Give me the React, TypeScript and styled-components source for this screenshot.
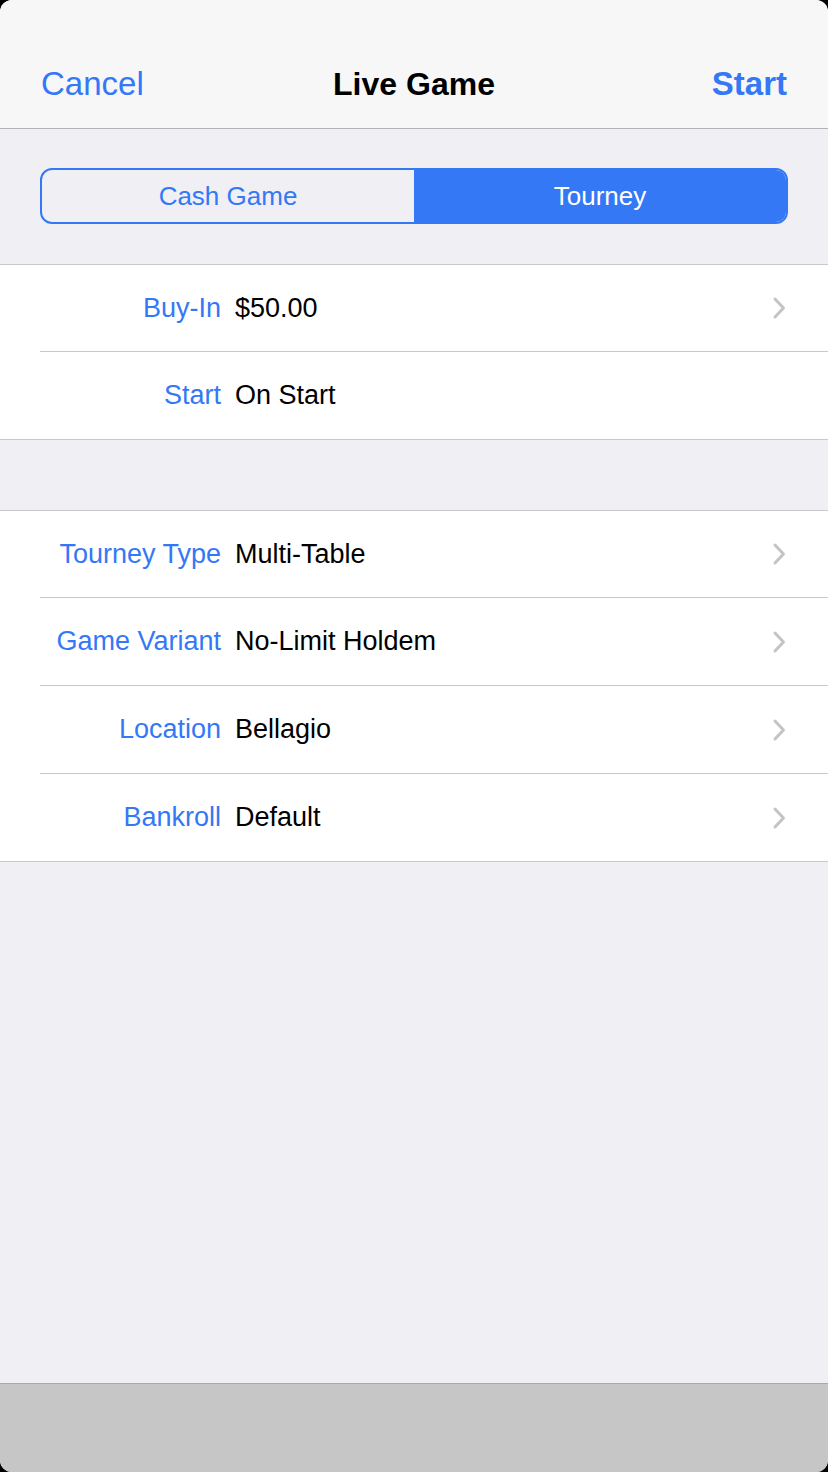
import React, { useState } from 'react'
import styled, { createGlobalStyle } from 'styled-components'

const GlobalStyle = createGlobalStyle`
  html, body {
    margin: 0;
    padding: 0;
    background: #000;
  }
  body {
    font-family: "Liberation Sans", Arial, sans-serif;
    -webkit-font-smoothing: antialiased;
  }
`

const BLUE = '#3478f6'

const Screen = styled.div`
  display: flex;
  flex-direction: column;
  height: 1472px;
  background: #efeff4;
  border-radius: 12px;
  overflow: hidden;
`

const NavBar = styled.header`
  display: grid;
  grid-template-columns: 1fr auto 1fr;
  align-items: center;
  height: 88px;
  padding: 40px 41px 0 41px;
  background: #f7f7f8;
  border-bottom: 1px solid #b3b3b6;
`

const NavButton = styled.button<{ $bold?: boolean; $align: 'left' | 'right' }>`
  justify-self: ${p => (p.$align === 'left' ? 'start' : 'end')};
  background: none;
  border: none;
  padding: 0;
  font-family: inherit;
  font-size: 33px;
  font-weight: ${p => (p.$bold ? 700 : 400)};
  color: ${BLUE};
  cursor: pointer;
`

const Title = styled.h1`
  margin: 0;
  font-size: 32px;
  font-weight: 700;
  color: #000;
`

const SegmentArea = styled.div`
  padding: 39px 40px 40px;
  border-bottom: 1px solid #c8c7cc;
`

const Segmented = styled.div`
  display: grid;
  grid-template-columns: 1fr 1fr;
  height: 56px;
  border: 2px solid ${BLUE};
  border-radius: 12px;
  overflow: hidden;
  box-sizing: border-box;
`

const Segment = styled.button<{ $active: boolean }>`
  border: none;
  padding: 0;
  font-family: inherit;
  font-size: 26px;
  background: ${p => (p.$active ? BLUE : 'transparent')};
  color: ${p => (p.$active ? '#fff' : BLUE)};
  cursor: pointer;
`

const Section = styled.section<{ $gap?: boolean }>`
  background: #fff;
  border-bottom: 1px solid #c8c7cc;
  ${p => (p.$gap ? 'margin-top: 70px; border-top: 1px solid #c8c7cc;' : '')}
`

const Row = styled.div<{ $last?: boolean }>`
  display: flex;
  align-items: center;
  height: 87px;
  margin-left: 40px;
  padding-right: 42px;
  border-bottom: ${p => (p.$last ? 'none' : '1px solid #c8c7cc')};

  &:first-child {
    height: 86px;
  }
`

const Label = styled.span`
  width: 181px;
  flex-shrink: 0;
  text-align: right;
  font-size: 27px;
  color: ${BLUE};
`

const Value = styled.span`
  flex: 1;
  margin-left: 14px;
  font-size: 27px;
  color: #000;
`

const Spacer = styled.div`
  flex: 1;
`

const Toolbar = styled.footer`
  height: 88px;
  background: #c6c6c6;
  border-top: 1px solid #a9a9ad;
`

const Chevron = () => (
  <svg width="14" height="24" viewBox="0 0 14 24" fill="none">
    <path d="M3 3l8.5 9L3 21" stroke="#c4c4c7" strokeWidth="3" strokeLinecap="round" strokeLinejoin="round" />
  </svg>
)

type Item = { label: string; value: string; chevron: boolean }

const firstGroup: Item[] = [
  { label: 'Buy-In', value: '$50.00', chevron: true },
  { label: 'Start', value: 'On Start', chevron: false },
]

const secondGroup: Item[] = [
  { label: 'Tourney Type', value: 'Multi-Table', chevron: true },
  { label: 'Game Variant', value: 'No-Limit Holdem', chevron: true },
  { label: 'Location', value: 'Bellagio', chevron: true },
  { label: 'Bankroll', value: 'Default', chevron: true },
]

const Group = ({ items, gap }: { items: Item[]; gap?: boolean }) => (
  <Section $gap={gap}>
    {items.map((item, i) => (
      <Row key={item.label} $last={i === items.length - 1}>
        <Label>{item.label}</Label>
        <Value>{item.value}</Value>
        {item.chevron && <Chevron />}
      </Row>
    ))}
  </Section>
)

export default function App() {
  const [mode, setMode] = useState<'cash' | 'tourney'>('tourney')

  return (
    <>
      <GlobalStyle />
      <Screen>
        <NavBar>
          <NavButton $align="left">Cancel</NavButton>
          <Title>Live Game</Title>
          <NavButton $align="right" $bold>Start</NavButton>
        </NavBar>

        <SegmentArea>
          <Segmented>
            <Segment $active={mode === 'cash'} onClick={() => setMode('cash')}>Cash Game</Segment>
            <Segment $active={mode === 'tourney'} onClick={() => setMode('tourney')}>Tourney</Segment>
          </Segmented>
        </SegmentArea>

        <Group items={firstGroup} />
        <Group items={secondGroup} gap />

        <Spacer />
        <Toolbar />
      </Screen>
    </>
  )
}
